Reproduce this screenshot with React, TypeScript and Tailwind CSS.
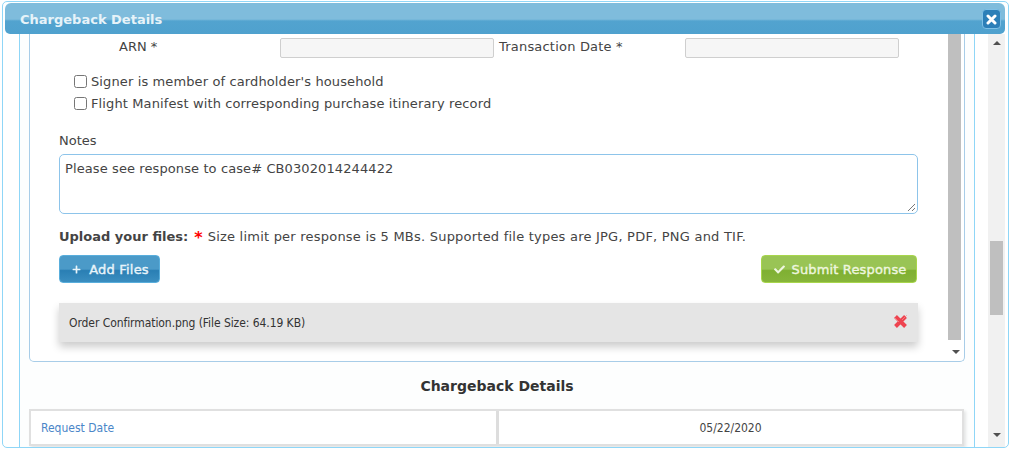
import { FaCheck, FaPlus } from 'react-icons/fa';

function Arrow({ up }: { up?: boolean }) {
  return (
    <svg width="8" height="4" viewBox="0 0 8 4" className="fill-[#505050]">
      <path d={up ? 'M4 0 L8 4 L0 4 Z' : 'M0 0 L8 0 L4 4 Z'} />
    </svg>
  );
}

export default function App() {
  return (
    <div className="w-[1012px] h-[449px] overflow-hidden bg-white pl-[2px] pt-px font-['DejaVu_Sans',sans-serif] text-[13px] text-[#444444]">
      <div className="w-[1007px] h-[447px] border border-[#8fd6f7] rounded-[5px] px-[2px] pt-px flex flex-col overflow-hidden">
        <div className="relative h-[31px] w-[1000px] shrink-0 rounded-[5px] rounded-t-[6px] bg-[linear-gradient(to_bottom,#7fbcdc_0%,#7fbcdc_52%,#52a3cf_58%,#4fa1ce_100%)] pl-[15px] pt-[2px] flex items-center">
          <span className="font-bold text-[13px] text-[#e6f3f9]">Chargeback Details</span>
          <div className="absolute right-[4px] top-[6px] w-[19px] h-[20px] rounded-[4px] border border-[#7fc0e6] bg-[#2c7fb8] flex items-center justify-center">
            <svg width="11" height="11" viewBox="0 0 11 11" className="stroke-white">
              <path d="M2 2 L9 9 M9 2 L2 9" strokeWidth="3" strokeLinecap="round" />
            </svg>
          </div>
        </div>
        <div className="flex flex-1 min-h-0">
          <div className="ml-[14px] w-[956px] shrink-0 border-x border-[#8fd6f7] pl-[9px] overflow-hidden bg-[#fdfefe]">
            <div className="w-[936px] h-[328px] border-x border-b border-[#a8cde8] rounded-b-[5px] flex bg-white">
              <div className="w-[919px] shrink-0 pl-[29px]">
                <div className="flex items-center h-[20px] mt-[4px] ml-[60px]">
                  <span className="w-[161px] -mt-[2px]">ARN *</span>
                  <div className="w-[214px] h-[20px] bg-[#f6f6f6] border border-[#cfcfcf] rounded-[2px]" />
                  <span className="w-[191px] pl-[5px] -mt-[2px] tracking-[0.2px]">Transaction Date *</span>
                  <div className="w-[214px] h-[20px] bg-[#f6f6f6] border border-[#cfcfcf] rounded-[2px]" />
                </div>
                <div className="ml-[15px] mt-[17px] flex flex-col gap-[9px]">
                  <label className="flex items-center gap-[4px] h-[13px]">
                    <input type="checkbox" className="w-[13px] h-[13px] m-0" />
                    <span className="tracking-[0.12px]">Signer is member of cardholder's household</span>
                  </label>
                  <label className="flex items-center gap-[4px] h-[13px]">
                    <input type="checkbox" className="w-[13px] h-[13px] m-0" />
                    <span className="tracking-[0.12px]">Flight Manifest with corresponding purchase itinerary record</span>
                  </label>
                </div>
                <div className="mt-[23px] h-[16px] leading-[16px]">Notes</div>
                <div className="mt-[5px] w-[859px] h-[60px] border border-[#8dc4ea] rounded-[5px] px-[5px] py-[4px] relative tracking-[0.1px]">
                  Please see response to case# CB0302014244422
                  <svg width="9" height="9" viewBox="0 0 9 9" className="absolute right-px bottom-px stroke-[#777777]">
                    <path d="M1 8 L8 1 M5 8 L8 5" />
                  </svg>
                </div>
                <div className="mt-[15px] h-[16px] leading-[16px] whitespace-nowrap flex items-center">
                  <span className="font-bold">Upload your files:</span>
                  <span className="font-bold text-[#ff0000] text-[16px] ml-[6px] mt-[2px]">*</span>
                  <span className="ml-[5px] tracking-[0.22px]">Size limit per response is 5 MBs. Supported file types are JPG, PDF, PNG and TIF.</span>
                </div>
                <div className="mt-[10px] flex justify-between w-[858px]">
                  <div className="w-[101px] h-[28px] pl-[2px] pt-px rounded-[4px] border border-[#59aedc] bg-[linear-gradient(to_bottom,#4b9ac8_0%,#4b9ac8_50%,#2a7fb4_56%,#3b8ec0_100%)] flex items-center justify-center gap-[8px] text-[#e8f4fa] tracking-[0.2px] [-webkit-text-stroke:0.4px_#e8f4fa]">
                    <FaPlus className="text-[9px]" />
                    <span>Add Files</span>
                  </div>
                  <div className="w-[156px] h-[28px] pl-[2px] pt-px rounded-[4px] border border-[#a8d64c] bg-[linear-gradient(to_bottom,#99c455_0%,#99c455_50%,#7fb032_56%,#87b53b_100%)] flex items-center justify-center gap-[7px] text-[#eef6df] tracking-[0.15px] [-webkit-text-stroke:0.4px_#eef6df]">
                    <FaCheck className="text-[11px]" />
                    <span>Submit Response</span>
                  </div>
                </div>
                <div className="mt-[20px] w-[859px] h-[39px] bg-[#e5e5e5] shadow-[0_5px_8px_rgba(0,0,0,0.2)] flex items-center justify-between pl-[10px] pr-[10px] font-['DejaVu_Sans_Condensed','Noto_Sans',sans-serif] text-[12px] tracking-[-0.07px] text-[#333333]">
                  <span>Order Confirmation.png (File Size: 64.19 KB)</span>
                  <svg width="15" height="15" viewBox="0 0 15 15" className="-mt-[3px]">
                    <path d="M2.5 2.5 L12.5 12.5 M12.5 2.5 L2.5 12.5" strokeWidth="4" stroke="#ee4450" />
                    <path d="M1.5 3.5 L6 8 M9 6 L13.5 1.5" strokeWidth="1" stroke="#f57a80" />
                  </svg>
                </div>
              </div>
              <div className="w-[15px] shrink-0 flex flex-col items-center">
                <div className="w-[13px] h-[306px] bg-[#bfbfbf] -ml-[4px]" />
                <div className="mt-[10px] -ml-[1px]"><Arrow /></div>
              </div>
            </div>
            <div className="mt-[15px] w-[936px] text-center font-bold text-[14px] leading-[18px] text-[#333333]">Chargeback Details</div>
            <div className="mt-[14px] w-[935px] h-[37px] flex border-2 border-[#e0e0e0] bg-white font-['DejaVu_Sans_Condensed','Noto_Sans',sans-serif] text-[12px] shadow-[2px_2px_3px_rgba(0,0,0,0.1)]">
              <div className="w-[468px] border-r-[3px] border-[#dddddd] pl-[10px] flex items-center text-[#4a86c8]">Request Date</div>
              <div className="flex-1 flex items-center justify-center text-[#444444]">05/22/2020</div>
            </div>
          </div>
          <div className="ml-[13px] w-[17px] shrink-0 bg-[#f1f1f1] flex flex-col items-center">
            <div className="h-[17px] flex items-center"><Arrow up /></div>
            <div className="mt-[190px] w-[13px] h-[74px] bg-[#bfbfbf]" />
            <div className="mt-[118px] flex items-center"><Arrow /></div>
          </div>
        </div>
      </div>
    </div>
  );
}
